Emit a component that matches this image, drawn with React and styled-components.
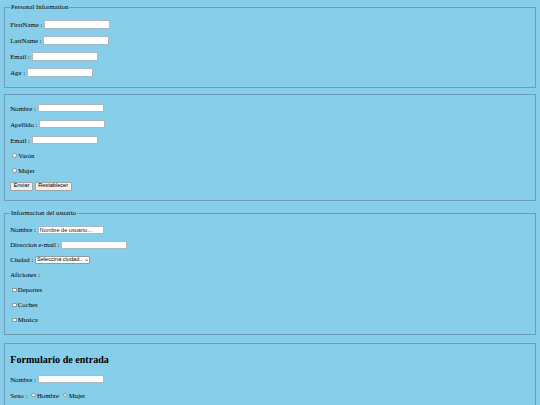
import React from 'react';
import styled, { createGlobalStyle } from 'styled-components';

const Global = createGlobalStyle`
  html, body { margin: 0; padding: 0; background: #87ceeb; }
  body {
    font-family: "Liberation Serif", "Times New Roman", serif;
    font-size: 6.75px;
    color: #000;
  }
`;

const Page = styled.div`
  padding: 3.4px 3.4px;
`;

const Form = styled.form`
  margin: 0 0 ${p => p.$gap}px;
`;

const Fieldset = styled.fieldset`
  margin: 0 0.85px;
  padding: ${p => p.$pt}px 5px ${p => p.$pb}px;
  border: 1px solid #6d9db6;
  min-width: 0;
`;

const Legend = styled.legend`
  padding: 0 0.85px;
  font-size: 6.75px;
  line-height: 7.8px;
`;

const Heading = styled.h2`
  margin: 8.4px 0;
  font-size: 10.1px;
  line-height: 11.6px;
  font-weight: bold;
`;

const Row = styled.div`
  display: flex;
  align-items: center;
  height: ${p => p.$h}px;
  margin: 6.75px 0;
  white-space: nowrap;
`;

const Label = styled.span`
  margin-right: 1.7px;
`;

const TextInput = styled.input`
  box-sizing: border-box;
  width: 66px;
  height: 8.4px;
  margin: 0;
  padding: 0 1px;
  border: 1px solid #a9b8c2;
  border-radius: 0.5px;
  background: #fff;
  font-family: "Liberation Sans", Arial, sans-serif;
  font-size: 5.6px;
  color: #000;
  &::placeholder { color: #222; }
`;

const SelectWrap = styled.span`
  position: relative;
  display: inline-flex;
  align-items: center;
`;

const Select = styled.select`
  appearance: none;
  box-sizing: border-box;
  width: 55px;
  height: 7.4px;
  margin: 0;
  padding: 0 6px 0 1px;
  border: 1px solid #8f9aa1;
  border-radius: 1px;
  background: #fff;
  font-family: "Liberation Sans", Arial, sans-serif;
  font-size: 5.6px;
  line-height: 1;
  color: #000;
`;

const Chevron = styled.svg`
  position: absolute;
  right: 1.6px;
  top: 50%;
  width: 3.4px;
  height: 2.2px;
  margin-top: -1.1px;
  pointer-events: none;
`;

const Check = styled.input`
  appearance: none;
  box-sizing: border-box;
  width: 4.6px;
  height: 4.6px;
  margin: ${p => (p.type === 'radio' ? '0 1.3px 0 2.1px' : '0 1.3px 0 1.7px')};
  border: 0.6px solid #8c969c;
  border-radius: ${p => (p.type === 'radio' ? '50%' : '0.8px')};
  background: #fff;
`;

const Choice = styled.label`
  display: inline-flex;
  align-items: center;
  margin-right: ${p => (p.$spaced ? 1.7 : 0)}px;
`;

const Button = styled.button`
  box-sizing: border-box;
  height: 8.9px;
  margin: 0 1.6px 0 0;
  padding: 0 2.5px;
  border: 1px solid #a2a2a2;
  border-radius: 1px;
  background: #efefef;
  font-family: "Liberation Sans", Arial, sans-serif;
  font-size: 5.6px;
  line-height: 1;
  color: #000;
`;

const TextRow = ({ label, placeholder, h = 9.25 }) => (
  <Row $h={h}>
    <Label>{label}</Label>
    <TextInput type="text" placeholder={placeholder} />
  </Row>
);

export default function App() {
  return (
    <Page>
      <Global />
      <Form $gap={5.8}>
        <Fieldset $pt={2} $pb={3}>
          <Legend>Personal Information</Legend>
          <TextRow label="FirstName :" />
          <TextRow label="LastName :" />
          <TextRow label="Email :" />
          <TextRow label="Age :" />
        </Fieldset>
      </Form>

      <Form $gap={7.8}>
        <Fieldset $pt={2} $pb={3}>
          <TextRow label="Nombre :" />
          <TextRow label="Apellido :" />
          <TextRow label="Email :" />
          <Row $h={8.25}>
            <Choice><Check type="radio" name="sexo1" />Varón</Choice>
          </Row>
          <Row $h={8.25}>
            <Choice><Check type="radio" name="sexo1" />Mujer</Choice>
          </Row>
          <Row $h={9.25}>
            <Button type="submit">Enviar</Button>
            <Button type="reset">Restablecer</Button>
          </Row>
        </Fieldset>
      </Form>

      <Form $gap={8.2}>
        <Fieldset $pt={2} $pb={3}>
          <Legend>Informacion del usuario</Legend>
          <TextRow label="Nombre :" placeholder="Nombre de usuario..." h={8.25} />
          <TextRow label="Direccion e-mail :" h={8.25} />
          <Row $h={8.25}>
            <Label>Ciudad :</Label>
            <SelectWrap>
              <Select defaultValue="">
                <option value="">Seleccina ciudad...</option>
                <option value="madrid">Madrid</option>
                <option value="lima">Lima</option>
              </Select>
              <Chevron viewBox="0 0 10 6" aria-hidden="true">
                <path d="M1 1 L5 5 L9 1" fill="none" stroke="#000" strokeWidth="2" />
              </Chevron>
            </SelectWrap>
          </Row>
          <Row $h={8.25}>Aficiones :</Row>
          <Row $h={8.25}>
            <Choice><Check type="checkbox" />Deportes</Choice>
          </Row>
          <Row $h={8.25}>
            <Choice><Check type="checkbox" />Coches</Choice>
          </Row>
          <Row $h={8.25}>
            <Choice><Check type="checkbox" />Musica</Choice>
          </Row>
        </Fieldset>
      </Form>

      <Form $gap={6.75}>
        <Fieldset $pt={2} $pb={3}>
          <Heading>Formulario de entrada</Heading>
          <TextRow label="Nombre :" />
          <Row $h={9.25}>
            <Label>Sexo :</Label>
            <Choice $spaced><Check type="radio" name="sexo2" />Hombre</Choice>
            <Choice><Check type="radio" name="sexo2" />Mujer</Choice>
          </Row>
        </Fieldset>
      </Form>
    </Page>
  );
}
